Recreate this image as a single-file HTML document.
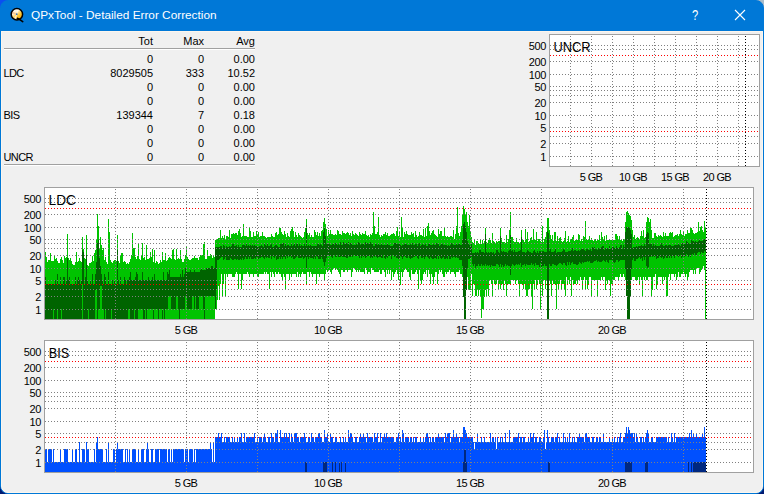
<!DOCTYPE html>
<html><head><meta charset="utf-8"><title>QPxTool - Detailed Error Correction</title>
<style>
html,body{margin:0;padding:0;}
body{width:764px;height:494px;overflow:hidden;background:#001a72;font-family:"Liberation Sans",sans-serif;position:relative;}
#cTL{position:absolute;left:0;top:0;width:12px;height:12px;background:#0a50f0;}
#cTR{position:absolute;right:0;top:0;width:12px;height:12px;background:#a8bccb;}
#win{position:absolute;left:0;top:0;width:762px;height:492px;border:1px solid #0078d7;border-radius:8px;background:linear-gradient(#0078d7 0,#0078d7 30px,#f0f0f0 30px);overflow:hidden;}
#tb{position:absolute;left:-1px;top:-1px;width:764px;height:31px;background:#0078d7;}
#client{position:absolute;left:0;top:30px;width:762px;height:462px;box-sizing:border-box;border:1px solid #fcf6ee;border-radius:0 0 7px 7px;}
#ttl{position:absolute;left:31px;top:8px;font-size:11.8px;line-height:14px;color:#fff;white-space:nowrap;letter-spacing:0px;}
#inner{position:absolute;left:0;top:0;width:764px;height:494px;}
.t{position:absolute;font-size:11px;line-height:13px;color:#000;white-space:nowrap;}
.r{text-align:right;}
.hr{position:absolute;left:4px;width:251px;height:1px;background:#a0a0a0;border-bottom:1px solid #fff;}
</style></head><body>
<div id="cTL"></div><div id="cTR"></div>
<div id="win"><div id="client"></div></div>
<div id="inner">
<svg style="position:absolute;left:8px;top:5px" width="18" height="20" viewBox="0 0 18 20">
<defs><linearGradient id="g" x1="0.2" y1="0.05" x2="0.85" y2="0.9"><stop offset="0" stop-color="#ffffff"/><stop offset="0.3" stop-color="#fff1d0"/><stop offset="0.62" stop-color="#ffc93a"/><stop offset="1" stop-color="#f5a800"/></linearGradient>
<clipPath id="cc"><circle cx="8.9" cy="9.3" r="5.6"/></clipPath></defs>
<circle cx="8.9" cy="9.3" r="5.6" fill="url(#g)"/>
<g clip-path="url(#cc)"><path d="M8.9 9.3L2 9L2 4Z" fill="#f6bf8c" opacity="0.8"/><path d="M8.9 9.3L4 16L8 16.5Z" fill="#fff" opacity="0.75"/><path d="M8.9 9.3L8 2L12 2Z" fill="#fff" opacity="0.7"/></g>
<circle cx="8.9" cy="9.3" r="5.7" fill="none" stroke="#000" stroke-width="1.5"/>
<circle cx="8.7" cy="9.2" r="0.9" fill="#3b78c0"/>
<path d="M9.4 13.3L11.5 14.4L14.7 16.6" stroke="#000" stroke-width="1.7" fill="none" stroke-linecap="round"/>
</svg>
<div id="ttl">QPxTool - Detailed Error Correction</div>
<svg style="position:absolute;left:686px;top:6px" width="70" height="20" viewBox="0 0 70 20">
<text transform="translate(9.2 14) scale(0.8 1)" font-family="Liberation Sans, sans-serif" font-size="14px" fill="#fff" text-anchor="middle">?</text>
<path d="M49 4L59 14M59 4L49 14" stroke="#fff" stroke-width="1.1" fill="none"/>
</svg>
<div class="hr" style="top:48px"></div>
<div class="hr" style="top:164px"></div>
<div class="t r" style="left:100px;top:35px;width:53px">Tot</div><div class="t r" style="left:160px;top:35px;width:44px">Max</div><div class="t r" style="left:210px;top:35px;width:45px">Avg</div>
<div class="t r" style="left:90px;top:53px;width:63px">0</div>
<div class="t r" style="left:160px;top:53px;width:44px">0</div>
<div class="t r" style="left:210px;top:53px;width:45px">0.00</div>
<div class="t" style="left:3.5px;top:67px;letter-spacing:-0.6px">LDC</div>
<div class="t r" style="left:90px;top:67px;width:63px">8029505</div>
<div class="t r" style="left:160px;top:67px;width:44px">333</div>
<div class="t r" style="left:210px;top:67px;width:45px">10.52</div>
<div class="t r" style="left:90px;top:81px;width:63px">0</div>
<div class="t r" style="left:160px;top:81px;width:44px">0</div>
<div class="t r" style="left:210px;top:81px;width:45px">0.00</div>
<div class="t r" style="left:90px;top:95px;width:63px">0</div>
<div class="t r" style="left:160px;top:95px;width:44px">0</div>
<div class="t r" style="left:210px;top:95px;width:45px">0.00</div>
<div class="t" style="left:3.5px;top:109px;letter-spacing:-0.6px">BIS</div>
<div class="t r" style="left:90px;top:109px;width:63px">139344</div>
<div class="t r" style="left:160px;top:109px;width:44px">7</div>
<div class="t r" style="left:210px;top:109px;width:45px">0.18</div>
<div class="t r" style="left:90px;top:123px;width:63px">0</div>
<div class="t r" style="left:160px;top:123px;width:44px">0</div>
<div class="t r" style="left:210px;top:123px;width:45px">0.00</div>
<div class="t r" style="left:90px;top:137px;width:63px">0</div>
<div class="t r" style="left:160px;top:137px;width:44px">0</div>
<div class="t r" style="left:210px;top:137px;width:45px">0.00</div>
<div class="t" style="left:3.5px;top:151px;letter-spacing:-0.6px">UNCR</div>
<div class="t r" style="left:90px;top:151px;width:63px">0</div>
<div class="t r" style="left:160px;top:151px;width:44px">0</div>
<div class="t r" style="left:210px;top:151px;width:45px">0.00</div>
<svg width="764" height="494" viewBox="0 0 764 494" style="position:absolute;left:0;top:0" shape-rendering="crispEdges">
<rect x="549.5" y="34.5" width="210" height="132" fill="#fff" stroke="#a0a0a0"/>
<rect x="44.5" y="187.5" width="709" height="132" fill="#fff" stroke="#a0a0a0"/>
<rect x="44.5" y="340.5" width="709" height="132" fill="#fff" stroke="#a0a0a0"/>
<path d="M45 319V252H46V257H47V262H48V260H50V253H51V261H54V255H55V259H56V258H57V261H58V263H60V259H61V257H62V260H63V263H64V256H65V258H66V257H67V234H68V258H69V260H70V258H71V261H72V264H73V265H75V262H76V252H77V262H78V261H79V258H80V261H81V262H82V237H83V249H84V258H85V259H86V235H87V265H88V266H89V263H91V262H92V256H93V261H94V253H95V250H96V240H97V214H98V226H99V248H100V237H101V245H102V250H103V248H104V260H105V257H106V262H107V264H108V219H109V232H110V260H111V262H112V263H113V261H114V260H116V261H117V235H118V261H119V263H120V256H121V253H123V262H124V261H125V262H126V264H127V263H128V264H129V262H130V259H131V255H132V233H133V248H135V257H136V259H137V256H138V244H139V259H140V260H141V255H142V243H143V258H144V257H145V260H146V245H147V259H149V258H150V252H151V257H152V249H153V262H154V250H155V263H156V261H157V262H158V264H159V263H160V260H161V262H162V252H163V260H165V253H166V261H167V260H168V258H169V257H170V258H171V259H172V250H173V249H174V259H175V260H176V249H177V259H178V258H179V259H180V250H181V259H182V262H184V259H185V255H186V247H187V257H188V259H189V260H191V259H192V258H194V256H195V258H198V260H199V257H200V255H201V256H202V255H203V244H204V242H205V259H207V250H208V256H210V254H211V255H212V258H213V256H214V257H215V240H216V239H218V238H220V230H221V238H222V236H223V238H224V235H225V239H226V236H228V237H229V230H230V238H231V234H233V233H234V234H235V233H237V235H238V231H239V229H240V233H241V237H242V236H243V224H244V236H247V237H249V227H250V231H251V237H253V232H254V236H256V231H257V235H258V232H259V237H260V236H262V232H263V236H265V237H266V238H267V237H271V234H272V236H273V237H275V233H276V232H277V235H278V234H279V228H281V232H282V234H283V235H284V231H285V234H286V237H287V233H288V236H289V237H290V231H291V229H292V227H293V231H294V237H295V232H296V235H297V237H298V233H299V235H300V236H301V237H302V238H303V237H304V232H305V228H306V219H307V233H308V235H309V233H310V237H311V235H312V237H314V230H315V232H316V235H317V232H318V236H319V233H320V236H321V231H322V230H323V222H324V218H325V224H326V229H327V236H328V230H329V234H330V230H331V234H333V235H335V234H336V235H337V230H338V231H339V234H341V235H342V231H343V233H345V234H346V233H347V232H348V233H349V235H350V233H351V236H352V231H353V234H354V235H355V233H356V234H357V235H358V236H359V232H360V234H361V235H362V233H363V234H365V231H366V235H367V236H368V235H369V237H370V234H371V235H372V233H373V212H374V226H375V234H377V232H378V217H379V235H380V237H381V235H382V236H383V234H385V232H386V235H387V233H388V236H390V235H391V234H393V233H394V234H395V236H396V231H397V227H398V236H399V231H400V237H401V217H402V227H403V237H404V232H405V234H406V231H407V234H408V235H411V232H412V234H413V233H414V237H415V231H416V235H417V237H418V236H419V232H420V235H422V236H423V229H424V237H425V228H426V236H427V226H428V223H429V231H430V235H431V233H432V231H433V230H434V234H435V235H436V236H437V237H438V229H439V234H440V231H442V236H444V228H445V236H446V237H447V236H448V237H450V236H452V237H453V230H454V239H455V234H456V226H457V207H458V233H459V236H460V232H461V226H462V214H463V206H464V209H465V214H466V212H467V222H468V226H469V215H470V232H471V237H472V242H473V243H474V239H475V245H476V241H478V243H479V244H480V239H481V244H482V240H483V243H484V241H485V228H486V242H487V243H488V240H489V238H490V240H491V243H492V233H493V241H494V242H495V243H496V241H497V242H498V241H500V228H501V238H502V242H505V243H506V235H507V242H508V239H509V230H510V212H511V237H513V241H514V242H516V238H517V242H519V244H520V242H521V230H522V240H524V242H525V229H526V239H527V232H528V242H529V241H530V238H531V237H532V240H533V229H534V240H536V232H537V241H538V239H540V241H541V242H542V226H543V242H544V239H545V237H546V232H547V218H549V230H550V235H551V239H552V235H553V241H554V232H556V241H557V236H558V241H559V238H560V237H561V241H562V242H563V241H564V238H565V231H566V242H567V241H568V236H569V242H570V240H571V239H572V237H573V235H574V241H575V240H576V239H577V240H578V234H579V235H580V241H581V239H582V241H583V236H584V237H585V221H586V239H587V240H589V236H590V240H591V238H592V240H593V241H594V240H595V239H596V241H597V239H598V240H599V235H600V241H601V232H602V237H603V240H604V236H605V241H606V235H607V240H615V234H617V236H618V239H619V236H620V240H622V241H623V239H625V222H626V212H627V211H628V213H629V215H630V216H631V220H632V230H633V237H634V235H635V239H636V238H637V237H638V238H639V239H640V236H641V231H642V236H643V230H644V238H645V237H646V222H647V217H648V218H649V222H650V219H651V230H652V238H654V233H656V236H657V237H658V235H659V236H660V235H661V236H662V237H663V232H664V236H665V233H666V236H669V233H670V232H671V233H672V232H673V237H674V236H675V235H677V234H678V236H679V234H680V230H681V234H682V235H683V231H684V236H685V234H687V230H688V233H690V227H691V228H692V230H693V233H694V234H695V233H697V232H698V222H699V231H700V227H701V226H702V230H703V232H704V221H705V228H706V319H705V270H704V266H703V268H702V270H701V272H700V274H699V268H696V274H695V270H694V274H693V270H690V272H689V277H688V280H687V274H686V277H685V274H684V272H683V274H681V277H679V272H678V277H677V280H676V274H675V277H674V274H671V280H670V274H669V277H668V296H666V277H665V280H664V277H663V284H662V277H658V284H657V289H656V274H655V277H653V290H652V296H651V277H648V280H646V277H645V280H644V277H643V296H642V280H641V277H640V284H639V277H638V280H635V277H632V280H631V296H630V319H627V296H626V280H625V277H624V274H623V277H621V274H620V277H619V280H618V277H615V280H613V284H611V296H610V280H608V284H607V280H606V290H605V277H603V280H602V277H601V280H598V296H597V280H592V296H591V277H589V284H588V289H587V280H586V289H585V277H584V280H583V289H582V280H581V277H580V280H578V284H577V280H576V284H573V280H572V296H571V277H570V284H569V280H568V284H567V277H566V296H565V289H564V284H562V289H561V280H560V284H559V289H558V284H557V309H556V284H553V280H552V296H551V284H550V280H549V319H547V280H546V289H545V280H543V296H542V284H541V309H540V284H539V280H538V284H537V289H536V280H535V289H534V284H533V309H532V296H531V284H530V289H528V296H526V290H525V284H524V289H523V284H520V296H519V284H518V280H516V284H515V280H511V284H507V296H506V284H505V280H504V290H503V284H501V289H500V284H499V290H498V280H497V284H494V280H493V296H492V284H491V280H489V296H488V289H487V296H486V290H485V297H484V309H482V318H481V296H480V290H479V296H478V290H477V296H475V284H473V296H472V274H471V290H468V277H467V290H466V319H464V297H463V277H462V274H460V270H459V272H456V277H455V274H454V272H451V274H450V270H449V272H447V274H446V272H445V277H443V274H442V270H441V272H440V270H439V274H438V284H437V272H435V277H434V284H433V277H432V274H431V284H430V274H429V270H428V277H427V270H426V274H425V272H424V274H423V280H422V284H421V280H420V270H419V289H418V274H417V270H416V272H415V274H412V270H411V280H410V277H409V272H407V270H406V268H405V270H404V272H403V277H402V272H401V285H400V272H399V280H398V274H397V270H396V272H395V274H394V277H393V272H392V280H391V270H390V274H389V270H388V274H387V270H386V277H385V272H384V270H382V274H380V270H379V272H374V270H372V268H371V274H370V272H368V274H367V270H366V268H365V274H364V272H360V270H359V272H358V270H357V272H356V270H355V268H353V272H352V277H351V270H348V272H347V270H345V272H343V270H341V277H340V274H339V272H338V270H337V268H336V270H335V268H333V270H332V274H331V272H330V270H328V272H327V270H326V274H325V280H324V274H320V277H319V274H317V284H316V274H313V277H312V274H311V272H310V277H309V272H307V284H306V274H303V272H302V274H301V277H300V274H299V277H298V272H297V277H296V274H292V277H291V274H290V280H289V274H286V289H285V277H284V274H283V280H282V277H281V274H279V272H278V274H276V272H275V277H274V274H273V272H272V277H271V272H270V289H269V274H267V272H266V274H265V272H264V274H259V277H257V274H254V277H253V274H250V277H249V274H248V272H247V274H243V280H242V289H241V274H239V289H238V274H237V272H236V274H235V277H232V274H228V277H227V274H226V297H225V274H224V284H223V297H222V274H221V284H220V300H219V286H218V300H217V309H215V319H45Z" fill="#00c300"/>
<path d="M45 319V277H46V284H55V280H56V284H57V274H58V284H60V277H61V284H63V277H65V284H66V280H67V258H68V280H69V277H70V284H75V277H76V284H77V280H78V277H79V280H80V284H81V280H82V250H83V252H84V284H85V277H86V255H87V280H88V284H90V280H91V284H92V274H93V284H95V274H96V262H97V243H98V240H99V258H100V266H101V274H102V280H103V284H104V274H105V277H106V284H108V272H109V284H112V280H113V284H114V280H115V284H117V250H118V280H119V284H120V277H121V284H124V277H125V280H126V284H127V280H129V277H130V272H131V280H135V277H136V272H137V274H138V280H142V272H143V280H148V277H149V280H152V277H153V280H154V274H155V280H163V272H164V280H167V272H168V274H169V270H170V277H180V274H181V277H182V270H183V277H184V274H185V268H186V272H190V270H191V272H194V270H195V272H200V270H201V268H202V270H206V268H211V266H213V268H215V247H220V246H222V248H223V245H224V246H225V248H226V246H227V247H229V246H230V247H231V246H232V244H234V246H236V245H237V247H238V245H239V247H242V245H245V246H246V244H247V246H248V245H249V246H250V245H251V246H252V245H253V246H254V245H255V246H257V247H259V246H261V245H262V246H263V247H264V244H265V245H266V246H267V244H268V246H270V245H271V244H272V247H274V246H275V245H277V246H278V247H280V244H282V243H284V246H285V244H286V246H287V245H289V246H291V243H292V246H293V245H294V243H295V246H296V244H298V246H299V244H300V246H301V245H302V246H304V244H305V246H306V225H307V246H308V245H309V246H310V245H311V246H317V244H319V245H320V244H321V245H322V246H323V232H324V228H325V236H326V244H328V243H329V244H330V245H332V244H333V243H334V245H335V243H336V244H337V245H338V244H339V245H340V242H341V245H343V242H344V244H345V243H347V244H348V242H349V245H350V243H351V244H352V245H356V244H357V245H358V242H359V243H360V245H361V244H364V245H365V242H366V244H367V243H368V244H370V242H371V244H373V246H375V243H376V244H377V245H378V244H379V245H381V244H382V245H387V243H388V245H390V246H393V245H394V243H396V244H400V245H401V246H402V245H404V244H407V245H410V244H411V245H412V243H413V245H415V244H417V246H418V244H419V243H420V246H421V245H422V244H423V245H425V244H426V246H428V244H430V245H433V244H434V245H436V243H437V244H439V246H440V245H441V244H443V245H447V246H448V245H449V246H450V245H451V243H452V244H453V245H456V244H457V245H458V244H460V245H462V240H463V224H464V222H465V226H466V232H467V241H468V244H469V245H470V246H471V244H472V253H475V252H476V253H477V252H478V253H479V250H481V252H484V253H485V234H486V252H487V253H488V252H489V253H490V252H492V253H493V252H494V254H495V253H496V250H498V252H499V253H500V236H501V251H502V252H503V251H504V252H507V253H508V251H509V250H510V235H511V251H512V250H513V252H514V250H515V252H518V251H520V250H521V237H522V252H525V253H526V252H527V250H528V251H529V252H531V253H533V251H534V250H535V252H536V253H537V251H538V253H539V251H541V252H542V251H544V252H547V231H548V233H549V251H550V249H551V252H554V251H555V249H556V253H557V252H562V251H563V249H564V250H565V252H568V251H571V250H572V248H573V251H574V250H576V251H578V250H579V251H580V250H581V249H584V250H585V251H586V249H588V250H590V249H591V251H592V247H593V248H594V247H595V249H597V250H598V248H599V249H601V247H602V246H604V250H605V248H606V249H607V248H608V249H609V246H610V249H611V248H612V246H613V247H614V248H616V246H617V248H618V249H619V247H620V245H622V249H623V245H624V247H625V232H626V227H629V228H630V230H631V234H632V248H633V247H636V246H637V247H638V246H641V245H642V246H644V244H645V246H646V234H647V232H648V233H649V244H651V243H652V246H653V244H654V246H655V245H656V246H660V245H661V243H662V245H663V246H665V245H667V246H668V245H671V246H674V245H678V244H679V245H680V246H681V244H682V243H683V245H684V243H685V244H686V241H687V242H688V243H689V244H690V243H691V240H692V241H694V242H695V241H696V242H698V241H699V239H700V241H703V240H704V239H705V240H706V252H705V251H704V253H702V252H701V254H700V252H698V253H697V255H695V253H694V256H693V254H692V255H691V257H690V255H689V257H688V255H687V254H686V256H685V257H684V255H683V257H682V258H681V255H680V256H679V257H678V256H677V255H676V256H675V258H674V256H672V258H671V256H670V258H669V256H668V258H666V256H665V258H664V259H663V257H662V258H661V257H660V256H659V258H657V259H656V256H655V257H654V256H653V257H652V256H651V257H649V267H648V268H647V266H646V257H645V260H644V257H643V261H642V258H641V259H640V257H639V258H638V259H636V261H634V258H633V260H632V269H631V296H630V319H627V296H626V269H625V260H620V261H619V262H618V260H616V262H615V263H614V262H613V260H609V263H608V262H607V260H606V262H605V261H604V260H603V261H602V262H599V261H598V262H597V260H596V261H594V262H593V263H590V261H589V262H588V261H587V262H584V263H583V262H582V264H581V263H580V262H579V264H578V265H576V264H573V262H572V263H571V265H570V262H569V265H568V262H567V266H566V265H565V263H563V265H562V264H561V263H559V264H558V265H557V266H556V265H554V264H552V266H550V264H549V319H547V266H545V264H544V266H542V267H541V263H540V267H539V265H536V263H535V266H534V264H533V265H532V263H531V265H527V264H526V266H525V264H524V265H522V267H521V263H520V265H519V264H518V265H517V264H516V265H515V266H514V265H513V264H512V266H511V275H510V266H508V265H507V266H506V264H505V266H504V267H503V265H502V267H501V264H500V267H499V265H498V264H496V266H492V265H491V267H490V265H489V266H488V265H487V266H486V264H485V266H484V265H483V266H482V264H481V266H479V264H478V266H476V268H475V264H474V266H473V264H472V257H471V259H468V268H467V290H466V319H464V297H463V266H462V260H459V258H457V257H456V258H455V257H453V258H452V257H451V259H449V256H448V259H447V258H446V259H444V257H443V258H442V259H441V258H440V256H439V259H438V256H437V259H436V258H434V259H432V258H431V257H430V259H429V258H428V257H427V256H426V257H425V259H424V257H423V258H421V256H419V259H418V258H417V256H415V257H413V258H411V259H410V258H409V256H408V258H406V257H405V256H404V257H403V259H402V257H401V256H400V258H399V259H398V258H396V256H395V257H394V256H393V255H392V259H391V255H390V256H388V258H387V257H386V259H385V258H384V255H383V258H381V257H378V258H377V257H376V256H375V257H374V256H373V258H372V257H371V258H370V255H369V256H367V257H366V258H365V256H364V257H363V256H362V258H361V256H360V258H359V256H358V255H357V256H355V255H353V257H352V255H351V257H349V255H348V258H346V257H342V256H341V257H338V255H337V257H335V255H334V256H333V258H332V257H331V255H330V256H329V255H328V256H327V258H326V262H325V266H324V262H323V259H322V257H321V259H318V257H317V256H316V259H315V257H314V259H313V258H310V257H309V259H308V257H307V268H306V257H305V258H304V259H303V257H302V258H298V256H297V257H296V258H295V259H293V257H292V258H291V256H290V257H289V256H288V258H287V256H286V259H285V257H283V259H282V257H281V259H280V257H279V259H277V260H276V256H275V258H274V257H273V256H272V259H271V256H270V258H268V257H267V258H266V257H265V259H264V258H263V257H261V258H259V259H258V257H256V259H255V258H254V259H251V257H250V259H249V257H248V259H246V257H245V259H244V260H243V258H242V260H241V259H240V260H238V259H237V260H236V259H234V260H232V259H231V258H230V260H226V257H225V259H224V260H223V257H221V258H220V259H219V260H217V290H216V309H215V296H205V319H204V309H203V296H199V309H196V296H195V309H194V296H192V309H187V296H185V309H180V319H179V309H178V296H176V309H171V296H168V309H165V319H164V309H163V319H162V309H159V319H158V309H154V319H153V309H147V319H146V309H145V319H143V309H138V319H135V309H134V319H130V309H128V319H112V309H111V319H106V309H105V319H104V309H102V286H100V309H98V319H97V290H95V319H89V309H88V319H83V284H82V319H62V309H61V319H58V309H57V319H54V309H53V319H45Z" fill="#006400"/>
<path d="M45 472V449H47V462H48V449H52V462H53V449H54V462H60V449H61V462H64V449H68V462H72V449H73V462H75V449H77V462H79V442H80V462H82V449H85V462H86V442H87V449H89V462H94V449H95V462H96V442H97V437H98V449H103V462H106V449H107V462H108V442H109V462H113V449H115V462H116V449H117V442H118V449H123V462H125V449H126V462H127V449H128V462H129V449H130V462H132V449H136V462H138V449H139V462H141V449H144V462H146V449H147V442H148V449H149V462H151V449H153V462H155V449H159V462H160V449H167V462H168V449H170V462H171V449H172V462H173V449H184V462H185V449H188V462H189V449H193V462H194V449H195V462H196V449H210V442H211V449H212V462H213V442H214V462H215V437H218V433H219V437H221V433H222V442H224V437H225V442H226V437H230V442H232V437H233V442H234V437H235V442H237V437H238V442H239V437H241V433H242V442H244V433H245V442H246V437H254V433H255V442H257V437H258V442H259V437H262V442H263V437H264V433H265V437H266V442H268V437H270V442H271V433H272V437H274V442H275V433H277V430H278V442H280V430H281V437H284V433H285V437H286V433H287V437H289V433H290V442H291V433H292V437H293V442H294V433H297V437H299V442H300V437H304V433H305V437H306V442H308V437H310V442H311V433H312V437H314V442H315V437H318V433H320V437H322V442H324V430H325V437H327V433H328V442H330V433H331V437H333V442H335V437H337V442H340V437H341V442H343V437H344V442H345V437H346V442H348V430H349V437H350V433H352V437H353V442H355V437H357V442H359V437H360V433H361V437H363V433H364V437H366V442H367V433H368V437H373V442H374V433H375V437H377V433H378V442H380V433H381V442H382V437H384V433H385V437H386V433H387V437H394V442H396V437H398V433H399V442H400V437H401V442H402V430H403V433H404V442H405V437H409V442H410V437H412V442H413V437H414V442H415V437H417V442H420V437H421V442H423V437H424V442H425V437H426V433H428V437H429V442H430V437H431V442H432V437H434V442H435V437H438V433H439V437H444V442H445V433H446V437H447V433H450V442H451V437H453V430H454V437H456V433H457V437H459V442H460V437H463V427H465V430H466V433H467V437H473V442H474V449H475V442H477V433H478V442H481V437H482V442H484V437H485V442H490V433H491V442H492V437H494V442H495V437H496V449H497V437H498V442H500V437H501V442H502V437H503V442H505V433H506V442H509V430H510V442H513V437H518V433H519V442H520V437H522V442H523V437H525V442H528V437H529V442H530V433H531V437H533V433H534V442H535V437H537V442H539V437H541V442H543V437H544V430H545V449H546V442H547V430H548V437H549V442H551V437H554V442H555V437H557V433H558V442H559V437H560V442H563V433H564V442H565V437H566V442H567V437H568V442H569V433H570V442H572V437H573V442H574V437H575V442H577V437H579V433H580V437H584V442H585V433H587V437H590V442H592V437H594V442H596V437H598V442H599V437H601V442H603V433H604V442H609V437H610V442H612V437H613V442H614V437H615V442H617V437H618V442H619V437H620V433H621V442H623V437H625V433H626V427H627V433H628V427H629V430H630V433H633V437H634V433H635V442H636V433H637V437H638V442H640V437H642V442H643V437H644V442H645V437H646V433H647V430H648V433H649V442H651V437H653V442H656V437H667V442H668V437H669V442H671V433H672V437H673V442H674V433H675V442H676V437H689V433H690V437H691V430H692V437H693V433H694V437H696V433H697V437H702V433H703V437H704V427H705V437H706V472H45Z" fill="#0050ff"/>
<g fill="#002880"><rect x="305" y="462" width="2" height="10"/><rect x="323" y="462" width="4" height="10"/><rect x="332" y="462" width="1" height="10"/><rect x="335" y="462" width="1" height="10"/><rect x="339" y="462" width="1" height="10"/><rect x="341" y="462" width="1" height="10"/><rect x="345" y="462" width="1" height="10"/><rect x="463" y="462" width="4" height="10"/><rect x="464" y="450" width="2" height="22"/><rect x="548" y="462" width="2" height="10"/><rect x="625" y="462" width="7" height="10"/><rect x="645" y="462" width="3" height="10"/><rect x="688" y="462" width="1" height="10"/><rect x="691" y="462" width="1" height="10"/><rect x="693" y="462" width="13" height="10"/></g>
<path d="M550 45.5H759M550 49.5H759M550 61.5H759M550 74.5H759M550 86.5H759M550 90.5H759M550 95.5H759M550 102.5H759M550 115.5H759M550 127.5H759M550 136.5H759M550 143.5H759M550 156.5H759M570.5 36V166M591.5 36V166M612.5 36V166M633.5 36V166M654.5 36V166M675.5 36V166M696.5 36V166M717.5 36V166M738.5 36V166" stroke="#808080" stroke-dasharray="1 2" fill="none"/><path d="M550 55.5H759M550 131.5H759" stroke="#ff0000" stroke-dasharray="1 2" fill="none"/><path d="M745.5 36V166" stroke="#000" stroke-dasharray="1 2" fill="none"/>
<path d="M45 198.5H753M45 202.5H753M45 214.5H753M45 227.5H753M45 239.5H753M45 243.5H753M45 248.5H753M45 255.5H753M45 268.5H753M45 280.5H753M45 289.5H753M45 296.5H753M45 309.5H753M115.5 189V319M186.5 189V319M257.5 189V319M328.5 189V319M399.5 189V319M470.5 189V319M541.5 189V319M612.5 189V319M683.5 189V319" stroke="#808080" stroke-dasharray="1 2" fill="none"/><path d="M45 208.5H753M45 284.5H753" stroke="#ff0000" stroke-dasharray="1 2" fill="none"/><path d="M706.5 189V319" stroke="#000" stroke-dasharray="1 2" fill="none"/>
<path d="M45 351.5H753M45 355.5H753M45 367.5H753M45 380.5H753M45 392.5H753M45 396.5H753M45 401.5H753M45 408.5H753M45 421.5H753M45 433.5H753M45 442.5H753M45 449.5H753M45 462.5H753M115.5 342V472M186.5 342V472M257.5 342V472M328.5 342V472M399.5 342V472M470.5 342V472M541.5 342V472M612.5 342V472M683.5 342V472" stroke="#808080" stroke-dasharray="1 2" fill="none"/><path d="M45 361.5H753M45 437.5H753" stroke="#ff0000" stroke-dasharray="1 2" fill="none"/><path d="M706.5 342V472" stroke="#000" stroke-dasharray="1 2" fill="none"/>
<g font-family="Liberation Sans, sans-serif" font-size="11px" fill="#000" shape-rendering="auto" letter-spacing="-0.4">
<text x="546" y="50" text-anchor="end">500</text><text x="546" y="66" text-anchor="end">200</text><text x="546" y="79" text-anchor="end">100</text><text x="546" y="91" text-anchor="end">50</text><text x="546" y="107" text-anchor="end">20</text><text x="546" y="120" text-anchor="end">10</text><text x="546" y="132" text-anchor="end">5</text><text x="546" y="148" text-anchor="end">2</text><text x="546" y="161" text-anchor="end">1</text>
<text x="41" y="203" text-anchor="end">500</text><text x="41" y="219" text-anchor="end">200</text><text x="41" y="232" text-anchor="end">100</text><text x="41" y="244" text-anchor="end">50</text><text x="41" y="260" text-anchor="end">20</text><text x="41" y="273" text-anchor="end">10</text><text x="41" y="285" text-anchor="end">5</text><text x="41" y="301" text-anchor="end">2</text><text x="41" y="314" text-anchor="end">1</text>
<text x="41" y="356" text-anchor="end">500</text><text x="41" y="372" text-anchor="end">200</text><text x="41" y="385" text-anchor="end">100</text><text x="41" y="397" text-anchor="end">50</text><text x="41" y="413" text-anchor="end">20</text><text x="41" y="426" text-anchor="end">10</text><text x="41" y="438" text-anchor="end">5</text><text x="41" y="454" text-anchor="end">2</text><text x="41" y="467" text-anchor="end">1</text>
<text x="591.0" y="181" text-anchor="middle" letter-spacing="-0.6">5 GB</text><text x="633.0" y="181" text-anchor="middle" letter-spacing="-0.6">10 GB</text><text x="675.0" y="181" text-anchor="middle" letter-spacing="-0.6">15 GB</text><text x="717.0" y="181" text-anchor="middle" letter-spacing="-0.6">20 GB</text>
<text x="186.0" y="334" text-anchor="middle" letter-spacing="-0.6">5 GB</text><text x="328.0" y="334" text-anchor="middle" letter-spacing="-0.6">10 GB</text><text x="470.0" y="334" text-anchor="middle" letter-spacing="-0.6">15 GB</text><text x="612.0" y="334" text-anchor="middle" letter-spacing="-0.6">20 GB</text>
<text x="186.0" y="487" text-anchor="middle" letter-spacing="-0.6">5 GB</text><text x="328.0" y="487" text-anchor="middle" letter-spacing="-0.6">10 GB</text><text x="470.0" y="487" text-anchor="middle" letter-spacing="-0.6">15 GB</text><text x="612.0" y="487" text-anchor="middle" letter-spacing="-0.6">20 GB</text>
</g>
<g font-family="Liberation Sans, sans-serif" font-size="14px" fill="#000" shape-rendering="auto">
<text x="553.5" y="52" textLength="37" lengthAdjust="spacingAndGlyphs">UNCR</text><text x="48.5" y="205" textLength="27.5" lengthAdjust="spacingAndGlyphs">LDC</text><text x="48.8" y="358" textLength="20.5" lengthAdjust="spacingAndGlyphs">BIS</text>
</g>
</svg>
</div>
</body></html>
